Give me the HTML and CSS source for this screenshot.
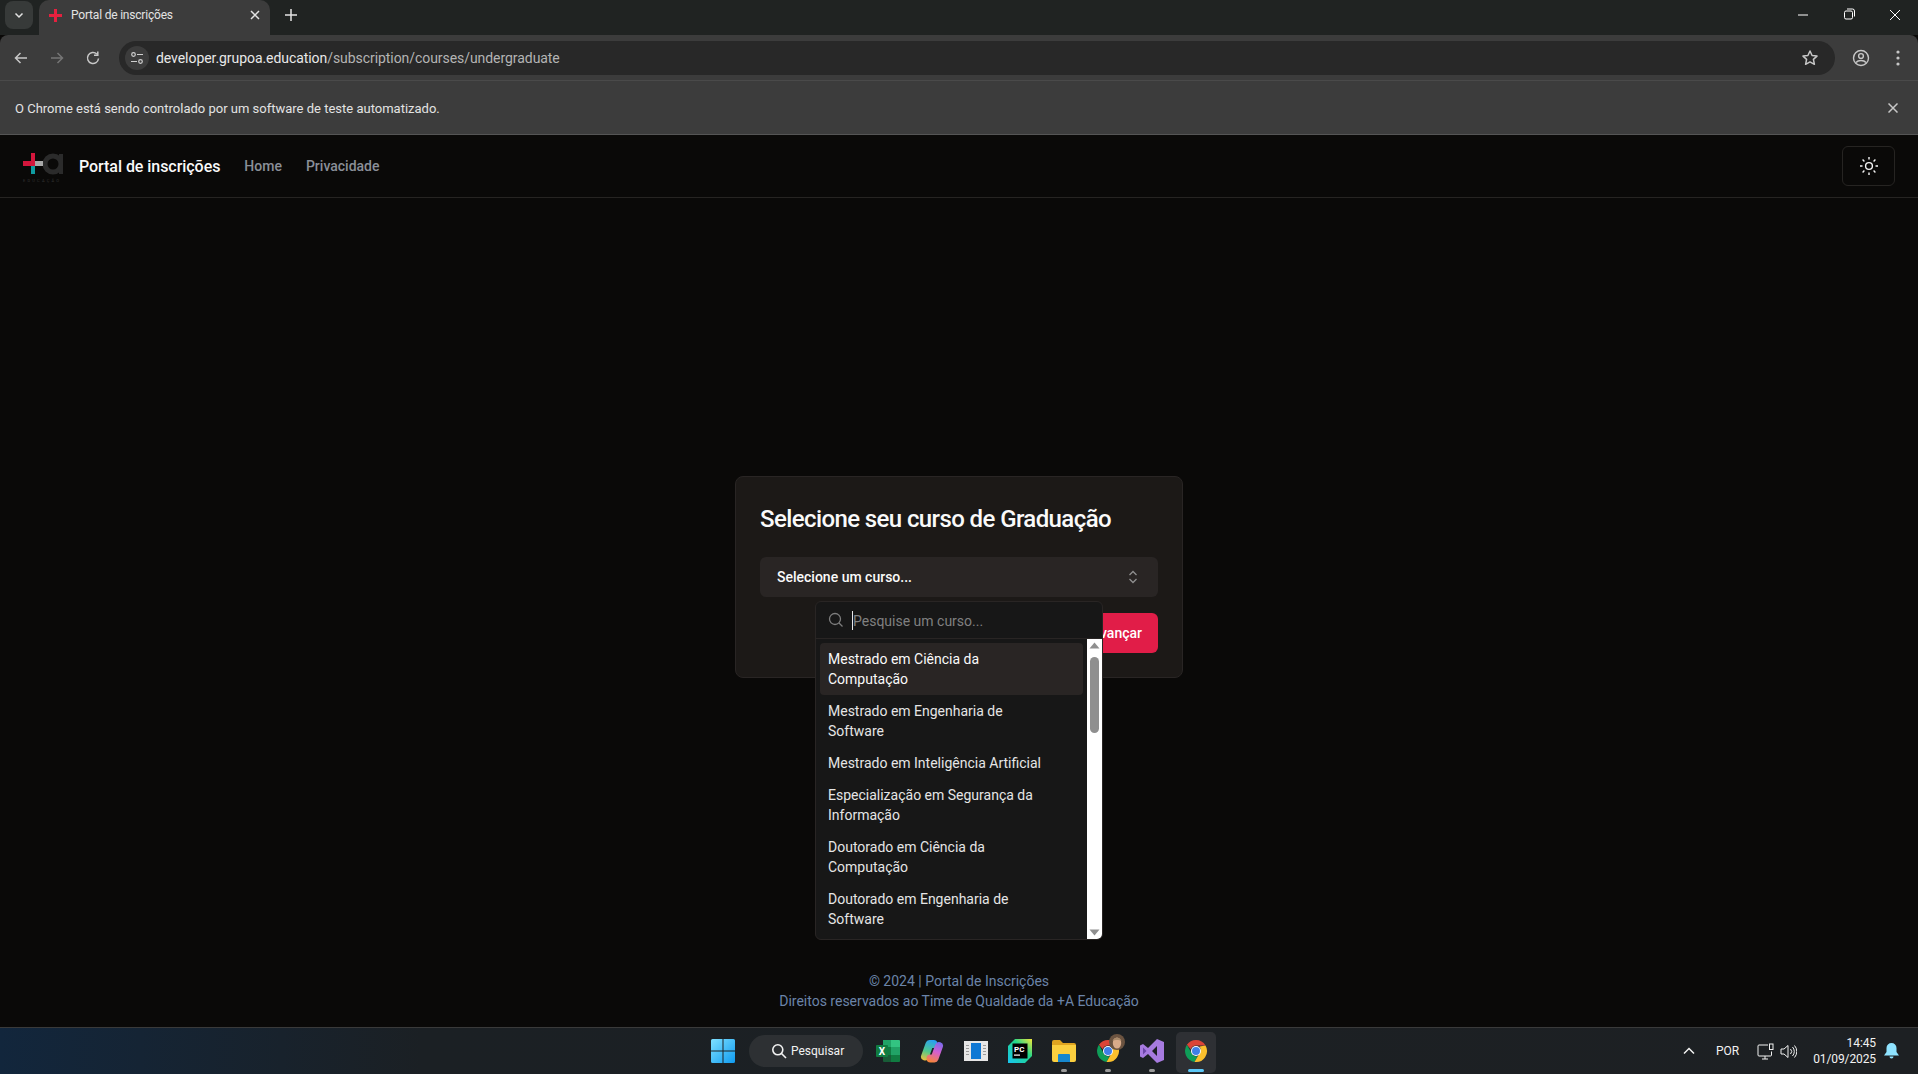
FILE: index.html
```html
<!DOCTYPE html>
<html lang="pt-BR">
<head>
    <meta charset="UTF-8">
    <meta name="viewport" content="width=device-width, initial-scale=1.0">
    <title>Portal de inscrições</title>
    <link rel="stylesheet" href="styles.css">
</head>
<body>
    <svg class="defs" width="0" height="0">
        <symbol id="chrome" viewBox="0 0 48 48">
            <path fill="#db4437" d="M24 2a22 22 0 0 1 19 11H24a11 11 0 0 0-10.500 7.500L5.800 11.700A22 22 0 0 1 24 2z"/>
            <path fill="#0f9d58" d="M5.800 11.700l9.500 16.700A11 11 0 0 0 27 34.500L21 45.800A22 22 0 0 1 5.800 11.700z"/>
            <path fill="#fbc02d" d="M43 13a22 22 0 0 1-22 32.800l9.700-16.900A11 11 0 0 0 31 15z"/>
            <circle cx="24" cy="24" r="10" fill="#fff"/>
            <circle cx="24" cy="24" r="8" fill="#3f7fe8"/>
        </symbol>
    </svg>

    <!-- Browser -->
    <div class="tabstrip">
        <div class="tab-search"><svg width="12" height="12" viewBox="0 0 12 12"><path d="M2.500 4.500 6 8l3.500-3.500" fill="none" stroke="#e3e3e3" stroke-width="1.500"/></svg></div>
        <div class="tab">
            <svg class="favicon" width="13" height="13" viewBox="0 0 13 13"><path d="M5 0h3v5h5v3H8v5H5V8H0V5h5z" fill="#e5213f"/></svg>
            <span class="tab-title">Portal de inscrições</span>
            <svg class="tab-close" width="10" height="10" viewBox="0 0 10 10"><path d="M1 1l8 8M9 1l-8 8" stroke="#e3e3e3" stroke-width="1.500"/></svg>
        </div>
        <svg class="tab-new" width="14" height="14" viewBox="0 0 14 14"><path d="M7 1v12M1 7h12" stroke="#e3e3e3" stroke-width="1.500"/></svg>
        <div class="window-buttons">
            <svg width="46" height="28" viewBox="0 0 46 28"><path d="M18 14h10" stroke="#fff"/></svg>
            <svg width="46" height="28" viewBox="0 0 46 28"><path d="M18.500 14.500a1.500 1.500 0 0 1 1.500-1.500h5a1.500 1.500 0 0 1 1.500 1.500v5a1.500 1.500 0 0 1-1.500 1.500h-5a1.500 1.500 0 0 1-1.500-1.500zM21 11h5.500a2 2 0 0 1 2 2v5.500" transform="translate(0 -3)" fill="none" stroke="#fff"/></svg>
            <svg width="46" height="28" viewBox="0 0 46 28"><path d="M18 9l10 10M28 9 18 19" stroke="#fff"/></svg>
        </div>
    </div>
    <div class="toolbar">
        <svg width="16" height="16" viewBox="0 0 16 16"><path d="M14 8H2.500M7.500 3 2.500 8l5 5" fill="none" stroke="#c7c7c7" stroke-width="1.500"/></svg>
        <svg class="nav-forward" width="16" height="16" viewBox="0 0 16 16"><path d="M2 8h11.500M8.500 3l5 5-5 5" fill="none" stroke="#757575" stroke-width="1.500"/></svg>
        <svg class="nav-reload" width="16" height="16" viewBox="0 0 16 16"><path d="M13.500 8.500A5.500 5.500 0 1 1 11.800 4M12.800 1.500v3.700H9" fill="none" stroke="#c7c7c7" stroke-width="1.500"/></svg>
        <div class="omnibox">
            <div class="site-info"><svg width="14" height="14" viewBox="0 0 14 14"><circle cx="3.500" cy="3.500" r="1.800" fill="none" stroke="#d0d0d0" stroke-width="1.200"/><circle cx="10.500" cy="10.500" r="1.800" fill="none" stroke="#d0d0d0" stroke-width="1.200"/><path d="M7 3.500h6M1 10.500h6" stroke="#d0d0d0" stroke-width="1.200"/></svg></div>
            <div class="url"><span class="url-host">developer.grupoa.education</span>/subscription/courses/undergraduate</div>
            <svg width="18" height="18" viewBox="0 0 18 18"><path d="M9 2l2.100 4.500 4.900.6-3.600 3.300 1 4.900L9 12.900l-4.400 2.400 1-4.900L2 7.100l4.900-.6z" fill="none" stroke="#c7c7c7" stroke-width="1.500" stroke-linejoin="round"/></svg>
        </div>
        <svg class="profile" width="18" height="18" viewBox="0 0 18 18"><circle cx="9" cy="9" r="7.500" fill="none" stroke="#c7c7c7" stroke-width="1.400"/><circle cx="9" cy="7" r="2.400" fill="none" stroke="#c7c7c7" stroke-width="1.400"/><path d="M4 13.500c1.300-1.600 3-2 5-2s3.700.4 5 2" fill="none" stroke="#c7c7c7" stroke-width="1.400"/></svg>
        <svg class="kebab" width="4" height="16" viewBox="0 0 4 16"><circle cx="2" cy="2" r="1.600" fill="#c7c7c7"/><circle cx="2" cy="8" r="1.600" fill="#c7c7c7"/><circle cx="2" cy="14" r="1.600" fill="#c7c7c7"/></svg>
    </div>
    <div class="infobar">
        <span>O Chrome está sendo controlado por um software de teste automatizado.</span>
        <svg width="10" height="10" viewBox="0 0 10 10"><path d="M.5.500l9 9M9.500.500l-9 9" stroke="#c7c7c7" stroke-width="1.500"/></svg>
    </div>

    <!-- Page -->
    <div class="page">
        <header class="site-header">
            <div class="logo">
                <svg width="40" height="22" viewBox="0 0 40 22">
                    <circle cx="30" cy="11" r="8" fill="none" stroke="#2b2b2b" stroke-width="5"/>
                    <path d="M38 1v20" stroke="#2b2b2b" stroke-width="4"/>
                    <path d="M12 8h8v5h-8z" fill="#a9a9a9"/>
                    <path d="M0 8h12v5H0zM8 0h4v8H8z" fill="#d4163c"/>
                    <path d="M8 13h4v8H8z" fill="#0f9ba0"/>
                </svg>
                <span class="logo-text">EDUCAÇÃO</span>
            </div>
            <a class="brand">Portal de inscrições</a>
            <nav class="site-nav">
                <a>Home</a>
                <a>Privacidade</a>
            </nav>
            <button class="theme-btn" type="button">
                <svg width="20" height="20" viewBox="0 0 20 20" fill="none" stroke="#f5f5f5" stroke-width="1.400"><circle cx="10" cy="10" r="3.400"/><path d="M10 1v2.500M10 16.500V19M1 10h2.500M16.500 10H19M3.600 3.600l1.800 1.800M14.600 14.600l1.800 1.800M3.600 16.400l1.800-1.800M14.600 5.400l1.800-1.800"/></svg>
            </button>
        </header>

        <main class="content">
            <section class="card">
                <h1 class="card-title">Selecione seu curso de Graduação</h1>
                <div class="select-wrap">
                    <div class="select">
                        <span>Selecione um curso...</span>
                        <svg width="16" height="16" viewBox="0 0 16 16" fill="none" stroke="#8f8f8f" stroke-width="1.300"><path d="M4.500 6 8 2.500 11.500 6M4.500 10 8 13.500 11.500 10"/></svg>
                    </div>

                    <!-- Dropdown -->
                    <div class="popover">
                        <div class="search-row">
                            <svg width="16" height="16" viewBox="0 0 16 16" fill="none" stroke="#7d7d7d" stroke-width="1.300"><circle cx="7" cy="7" r="5.500"/><path d="M11 11l3.500 3.500"/></svg>
                            <span class="caret"></span>
                            <span class="placeholder">Pesquise um curso...</span>
                        </div>
                        <div class="list-wrap">
                            <ul class="course-list">
                                <li class="active">Mestrado em Ciência da Computação</li>
                                <li>Mestrado em Engenharia de Software</li>
                                <li>Mestrado em Inteligência Artificial</li>
                                <li>Especialização em Segurança da Informação</li>
                                <li>Doutorado em Ciência da Computação</li>
                                <li>Doutorado em Engenharia de Software</li>
                            </ul>
                            <div class="scrollbar">
                                <svg width="15" height="15" viewBox="0 0 15 15"><path d="M7.500 3.500l5 6h-10z" fill="#8f8f8f"/></svg>
                                <div class="scroll-track"><div class="scroll-thumb"></div></div>
                                <svg width="15" height="15" viewBox="0 0 15 15"><path d="M7.500 11.500l5-6h-10z" fill="#8f8f8f"/></svg>
                            </div>
                        </div>
                    </div>
                </div>
                <div class="card-actions">
                    <button class="btn-primary" type="button">Avançar</button>
                </div>
            </section>
        </main>

        <footer class="site-footer">
            <p>© 2024 | Portal de Inscrições</p>
            <p>Direitos reservados ao Time de Qualdade da +A Educação</p>
        </footer>
    </div>

    <!-- Taskbar -->
    <div class="taskbar">
        <div class="task-center">
            <div class="task-slot">
                <svg width="24" height="24" viewBox="0 0 24 24"><defs><linearGradient id="win" x1="0" y1="0" x2="1" y2="1"><stop offset="0" stop-color="#7fe0ff"/><stop offset="1" stop-color="#0f9bf0"/></linearGradient></defs><path fill="url(#win)" d="M0 1.500A1.500 1.500 0 0 1 1.500 0h10v11.500H0zM12.500 0h10A1.500 1.500 0 0 1 24 1.500v10H12.500zM0 12.500h11.500V24h-10A1.500 1.500 0 0 1 0 22.500zM12.500 12.500H24v10a1.500 1.500 0 0 1-1.500 1.500h-10z"/></svg>
            </div>
            <div class="task-search">
                <svg width="16" height="16" viewBox="0 0 16 16" fill="none" stroke="#f2f2f2" stroke-width="1.600"><circle cx="6.800" cy="6.800" r="5"/><path d="M10.500 10.500 15 15"/></svg>
                <span>Pesquisar</span>
            </div>
            <div class="task-slot">
                <svg width="24" height="22" viewBox="0 0 24 22"><path fill="#21a366" d="M7 0h8v7H7z"/><path fill="#33c481" d="M15 0h8a1 1 0 0 1 1 1v6h-9z"/><path fill="#107c41" d="M7 7h8v8H7z"/><path fill="#21a366" d="M15 7h9v8h-9z"/><path fill="#185c37" d="M7 15h8v7H8a1 1 0 0 1-1-1z"/><path fill="#107c41" d="M15 15h9v6a1 1 0 0 1-1 1h-8z"/><rect x="0" y="5" width="12" height="12" rx="1" fill="#107c41"/><text x="6" y="14.500" class="xl-letter">X</text></svg>
            </div>
            <div class="task-slot">
                <svg width="24" height="24" viewBox="0 0 24 24" fill="none" stroke-width="8" stroke-linecap="round" stroke-linejoin="round"><defs><linearGradient id="cop1" gradientUnits="userSpaceOnUse" x1="12" y1="1" x2="5" y2="22"><stop offset="0" stop-color="#2a9ff0"/><stop offset=".55" stop-color="#4fc88c"/><stop offset="1" stop-color="#f2c23a"/></linearGradient><linearGradient id="cop2" gradientUnits="userSpaceOnUse" x1="19" y1="2" x2="11" y2="23"><stop offset="0" stop-color="#6f6cf0"/><stop offset=".5" stop-color="#d45fd0"/><stop offset="1" stop-color="#f7853a"/></linearGradient></defs><path stroke="url(#cop1)" d="M13.500 5H9.500L5 17.500"/><path stroke="url(#cop2)" d="M19 7l-4.500 12.500H10.500"/></svg>
            </div>
            <div class="task-slot">
                <svg width="24" height="20" viewBox="0 0 24 20"><path fill="#e6e6e6" d="M0 0h24v20H0z"/><path fill="#9a9a9a" d="M2 4h3v1H2zM2 7h3v1H2zM2 10h3v1H2zM2 13h3v1H2zM19 4h3v1h-3zM19 7h3v1h-3zM19 10h3v1h-3zM19 13h3v1h-3z"/><path fill="#0f78d4" d="M7 2h10v16H7z"/></svg>
            </div>
            <div class="task-slot">
                <svg width="24" height="24" viewBox="0 0 24 24"><defs><linearGradient id="pc" x1="0" y1="1" x2="1" y2="0"><stop offset="0" stop-color="#18c4f0"/><stop offset=".6" stop-color="#21d789"/><stop offset="1" stop-color="#f5e73a"/></linearGradient></defs><path fill="url(#pc)" d="M7 0h17v17l-7 7H0V7z"/><path fill="#000" d="M4.500 4.500h15v15h-15z"/><text x="6" y="12.500" class="pc-letters">PC</text><path fill="#fff" d="M6 15.500h6v1.200H6z"/></svg>
            </div>
            <div class="task-slot has-dot">
                <svg width="24" height="22" viewBox="0 0 24 22"><path fill="#e0a420" d="M0 2a2 2 0 0 1 2-2h6l3 3h11a2 2 0 0 1 2 2v3H0z"/><path fill="#fbcf3f" d="M0 5h24v15a2 2 0 0 1-2 2H2a2 2 0 0 1-2-2z"/><path fill="#1687cf" d="M7 14h10a1 1 0 0 1 1 1v7H6v-7a1 1 0 0 1 1-1z"/></svg>
            </div>
            <div class="task-slot has-dot">
                <svg width="24" height="24"><use href="#chrome"/></svg>
                <svg class="avatar" width="16" height="16" viewBox="0 0 16 16"><circle cx="8" cy="8" r="8" fill="#6b5340"/><ellipse cx="8" cy="9" rx="4.200" ry="5.500" fill="#d9ab8a"/><path d="M3.500 7c1-4.500 8-4.500 9 0-2-1.200-7-1.200-9 0z" fill="#a98a6a"/></svg>
            </div>
            <div class="task-slot has-dot">
                <svg width="24" height="24" viewBox="0 0 24 24"><path fill="#a77be0" d="M17 0l7 3v18l-7 3-9-9-5 4-3-1.500v-11L3 5l5 4zM17 7l-5 5 5 5z"/><path fill="#6b46a8" d="M3 8.500v7L6.500 12z"/></svg>
            </div>
            <div class="task-slot task-active">
                <svg width="24" height="24"><use href="#chrome"/></svg>
            </div>
        </div>
        <div class="tray">
            <svg class="tray-chevron" width="12" height="8" viewBox="0 0 12 8"><path d="M1 6.500l5-5 5 5" fill="none" stroke="#f2f2f2" stroke-width="1.500"/></svg>
            <span class="tray-lang">POR</span>
            <svg class="tray-net" width="17" height="17" viewBox="0 0 17 17" fill="none" stroke="#f2f2f2"><path d="M11 2H2a1 1 0 0 0-1 1v9a1 1 0 0 0 1 1h11.500a1 1 0 0 0 1-1V8.500M5 16h6M8 13v3"/><rect x="12.500" y="1" width="3.500" height="5.500"/></svg>
            <svg class="tray-sound" width="17" height="17" viewBox="0 0 17 17" fill="none" stroke="#f2f2f2"><path d="M1 6h3l4-3.500v12L4 11H1zM10.500 6a3.500 3.500 0 0 1 0 5M12.500 4a6.500 6.500 0 0 1 0 9M14.500 2.500a9 9 0 0 1 0 12"/></svg>
            <div class="tray-clock">
                <span>14:45</span>
                <span>01/09/2025</span>
            </div>
            <svg class="tray-bell" width="15" height="16" viewBox="0 0 15 16"><path fill="#8fe3ff" d="M7.500 0a5 5 0 0 1 5 5v4l2.500 3.500H0L2.500 9V5a5 5 0 0 1 5-5zM5.500 13.500h4a2 2 0 0 1-4 0z"/></svg>
        </div>
    </div>
</body>
</html>
```

FILE: styles.css
```css
* {
    box-sizing: border-box;
}

html, body {
    height: 100%;
}

body {
    font-family: Roboto, sans-serif;
    margin: 0;
    padding: 0;
    height: 1074px;
    overflow: hidden;
    display: flex;
    flex-direction: column;
    background-color: #0a0908;
    color: #fafafa;
}

.defs {
    position: absolute;
}

/* Browser */
.tabstrip {
    height: 35px;
    flex: none;
    display: flex;
    align-items: flex-start;
    background-color: #202322;
    padding-left: 5px;
}

.tab-search {
    width: 28px;
    height: 28px;
    margin-top: 1px;
    border-radius: 8px;
    background-color: #373a39;
    display: flex;
    align-items: center;
    justify-content: center;
}

.tab {
    position: relative;
    width: 231px;
    height: 35px;
    margin-left: 6px;
    padding: 0 10px 5px 10px;
    background-color: #3c3c3c;
    border-radius: 10px 10px 0 0;
    display: flex;
    align-items: center;
    gap: 9px;
}

.tab-title {
    flex: 1;
    font-size: 12px;
    letter-spacing: -0.2px;
    color: #e3e3e3;
    white-space: nowrap;
}

.tab-new {
    margin: 8px 0 0 14px;
}

.window-buttons {
    margin-left: auto;
    margin-top: 1px;
    display: flex;
}

.toolbar {
    height: 46px;
    flex: none;
    display: flex;
    align-items: center;
    padding: 0 15px 0 13px;
    background-color: #3c3c3c;
    border-bottom: 1px solid #4a4a4a;
    border-radius: 8px 8px 0 0;
}

.nav-forward {
    margin-left: 20px;
}

.nav-reload {
    margin-left: 20px;
}

.omnibox {
    width: 1716px;
    height: 34px;
    margin-left: 18px;
    padding: 0 16px 0 6px;
    border-radius: 17px;
    background-color: #282828;
    display: flex;
    align-items: center;
}

.site-info {
    width: 24px;
    height: 24px;
    border-radius: 50%;
    background-color: #3c3c3c;
    display: flex;
    align-items: center;
    justify-content: center;
}

.url {
    flex: 1;
    margin-left: 7px;
    font-size: 14px;
    letter-spacing: -0.06px;
    color: #b4b4b4;
    white-space: nowrap;
}

.url-host {
    color: #e8e8e8;
}

.profile {
    margin-left: 17px;
}

.kebab {
    margin-left: 26px;
}

.infobar {
    height: 54px;
    flex: none;
    display: flex;
    align-items: center;
    justify-content: space-between;
    padding: 1px 20px 0 15px;
    background-color: #3c3c3c;
    border-bottom: 1px solid #555;
    font-size: 13px;
    color: #e3e3e3;
}

/* Page */
.page {
    flex: 1;
    min-height: 0;
    display: flex;
    flex-direction: column;
}

.site-header {
    height: 63px;
    flex: none;
    display: flex;
    align-items: center;
    padding: 0 23px;
    border-bottom: 1px solid #262422;
}

.logo {
    width: 40px;
    margin-top: 5px;
    display: flex;
    flex-direction: column;
    align-items: flex-start;
    gap: 2px;
}

.logo-text {
    font-size: 4px;
    line-height: 7px;
    letter-spacing: 2.200px;
    color: #333;
    white-space: nowrap;
}

.brand {
    margin-left: 16px;
    font-size: 16px;
    font-weight: 500;
    letter-spacing: -0.05px;
    color: #fafafa;
}

.site-nav {
    display: flex;
    gap: 24px;
    margin-left: 24px;
}

.site-nav a {
    font-size: 14px;
    font-weight: 500;
    color: #8a8f98;
}

.theme-btn {
    width: 53px;
    height: 40px;
    margin-left: auto;
    background: none;
    border: 1px solid #262422;
    border-radius: 6px;
    display: flex;
    align-items: center;
    justify-content: center;
}

.content {
    flex: 1;
    display: flex;
    align-items: center;
    justify-content: center;
}

.card {
    width: 448px;
    padding: 24px;
    background-color: #1c1917;
    border: 1px solid #292524;
    border-radius: 8px;
    display: flex;
    flex-direction: column;
    gap: 20px;
}

.card-title {
    margin: 0;
    font-size: 24px;
    line-height: 36px;
    font-weight: 500;
    letter-spacing: -0.6px;
    color: #fafafa;
}

.select-wrap {
    position: relative;
}

.select {
    height: 40px;
    padding: 0 17px 0 17px;
    background-color: #292524;
    border-radius: 6px;
    display: flex;
    align-items: center;
    justify-content: space-between;
    font-size: 14px;
    font-weight: 500;
    color: #fafafa;
}

.popover {
    position: absolute;
    z-index: 10;
    top: 44px;
    left: 55px;
    width: 288px;
    height: 339px;
    background-color: #171717;
    border: 1px solid #292524;
    border-radius: 6px;
    overflow: hidden;
    display: flex;
    flex-direction: column;
}

.search-row {
    height: 37px;
    flex: none;
    display: flex;
    align-items: center;
    padding-left: 12px;
    border-bottom: 1px solid #292524;
    font-size: 14px;
    color: #808080;
}

.placeholder {
    padding-top: 2px;
}

.caret {
    width: 1px;
    height: 19px;
    margin-left: 8px;
    background-color: #e8e8e8;
}

.list-wrap {
    flex: 1;
    min-height: 0;
    display: flex;
}

.course-list {
    flex: 1;
    margin: 0;
    padding: 4px 4px 0;
    list-style: none;
    overflow: hidden;
}

.course-list li {
    padding: 6px 42px 6px 8px;
    font-size: 14px;
    line-height: 20px;
    color: #e5e5e5;
    border-radius: 4px;
}

.course-list li.active {
    background-color: #292524;
    color: #fafafa;
}

.scrollbar {
    width: 15px;
    flex: none;
    background-color: #fff;
    display: flex;
    flex-direction: column;
}

.scroll-track {
    flex: 1;
    padding: 3px;
}

.scroll-thumb {
    height: 76px;
    background-color: #8f8f8f;
    border-radius: 5px;
}

.card-actions {
    display: flex;
    justify-content: flex-end;
    margin-top: -4px;
}

.btn-primary {
    height: 40px;
    padding: 0 16px;
    background-color: #e11d48;
    color: #fff;
    border: none;
    border-radius: 6px;
    font-family: inherit;
    font-size: 14px;
    font-weight: 500;
}

.site-footer {
    height: 71px;
    flex: none;
    padding-top: 15px;
    text-align: center;
    font-size: 14px;
    line-height: 20px;
    color: #6b84a8;
}

.site-footer p {
    margin: 0;
}

/* Taskbar */
.taskbar {
    height: 47px;
    flex: none;
    position: relative;
    display: flex;
    align-items: center;
    background: linear-gradient(90deg, #12263c 0, #1b2024 22%, #1d2023 100%);
    border-top: 1px solid #3a3a3a;
    padding-left: 701px;
    color: #f2f2f2;
}

.task-center {
    display: flex;
    align-items: center;
}

.task-slot {
    position: relative;
    width: 44px;
    height: 41px;
    margin-top: 2px;
    padding-bottom: 3px;
    display: flex;
    align-items: center;
    justify-content: center;
}

.task-slot.has-dot::after,
.task-active::after {
    content: "";
    position: absolute;
    bottom: 1px;
    left: 50%;
    width: 6px;
    height: 3px;
    margin-left: -3px;
    border-radius: 2px;
    background-color: #9a9a9a;
}

.task-active {
    width: 40px;
    margin-left: 2px;
    background-color: #2e3034;
    border-radius: 5px;
}

.task-active::after {
    width: 16px;
    margin-left: -8px;
    background-color: #5cc8f7;
}

.avatar {
    position: absolute;
    top: 2px;
    right: 5px;
}

.task-search {
    width: 114px;
    height: 32px;
    margin: 0 3px 0 4px;
    padding-left: 22px;
    border-radius: 16px;
    background-color: #2d3033;
    display: flex;
    align-items: center;
    gap: 4px;
    font-size: 12px;
}

.xl-letter {
    font-family: Roboto, sans-serif;
    font-size: 10px;
    font-weight: 700;
    fill: #fff;
    text-anchor: middle;
}

.pc-letters {
    font-family: Roboto, sans-serif;
    font-size: 8px;
    font-weight: 700;
    fill: #fff;
}

.tray {
    margin-left: auto;
    padding-right: 19px;
    display: flex;
    align-items: center;
    font-size: 12px;
}

.tray-lang {
    width: 24px;
    margin-left: 21px;
    font-size: 12px;
}

.tray-net {
    margin-left: 17px;
}

.tray-sound {
    margin-left: 6px;
}

.tray-clock {
    width: 62px;
    margin-left: 17px;
    display: flex;
    flex-direction: column;
    align-items: flex-end;
    line-height: 16px;
    font-size: 12px;
    letter-spacing: -0.1px;
}

.tray-bell {
    margin-left: 8px;
}
```
